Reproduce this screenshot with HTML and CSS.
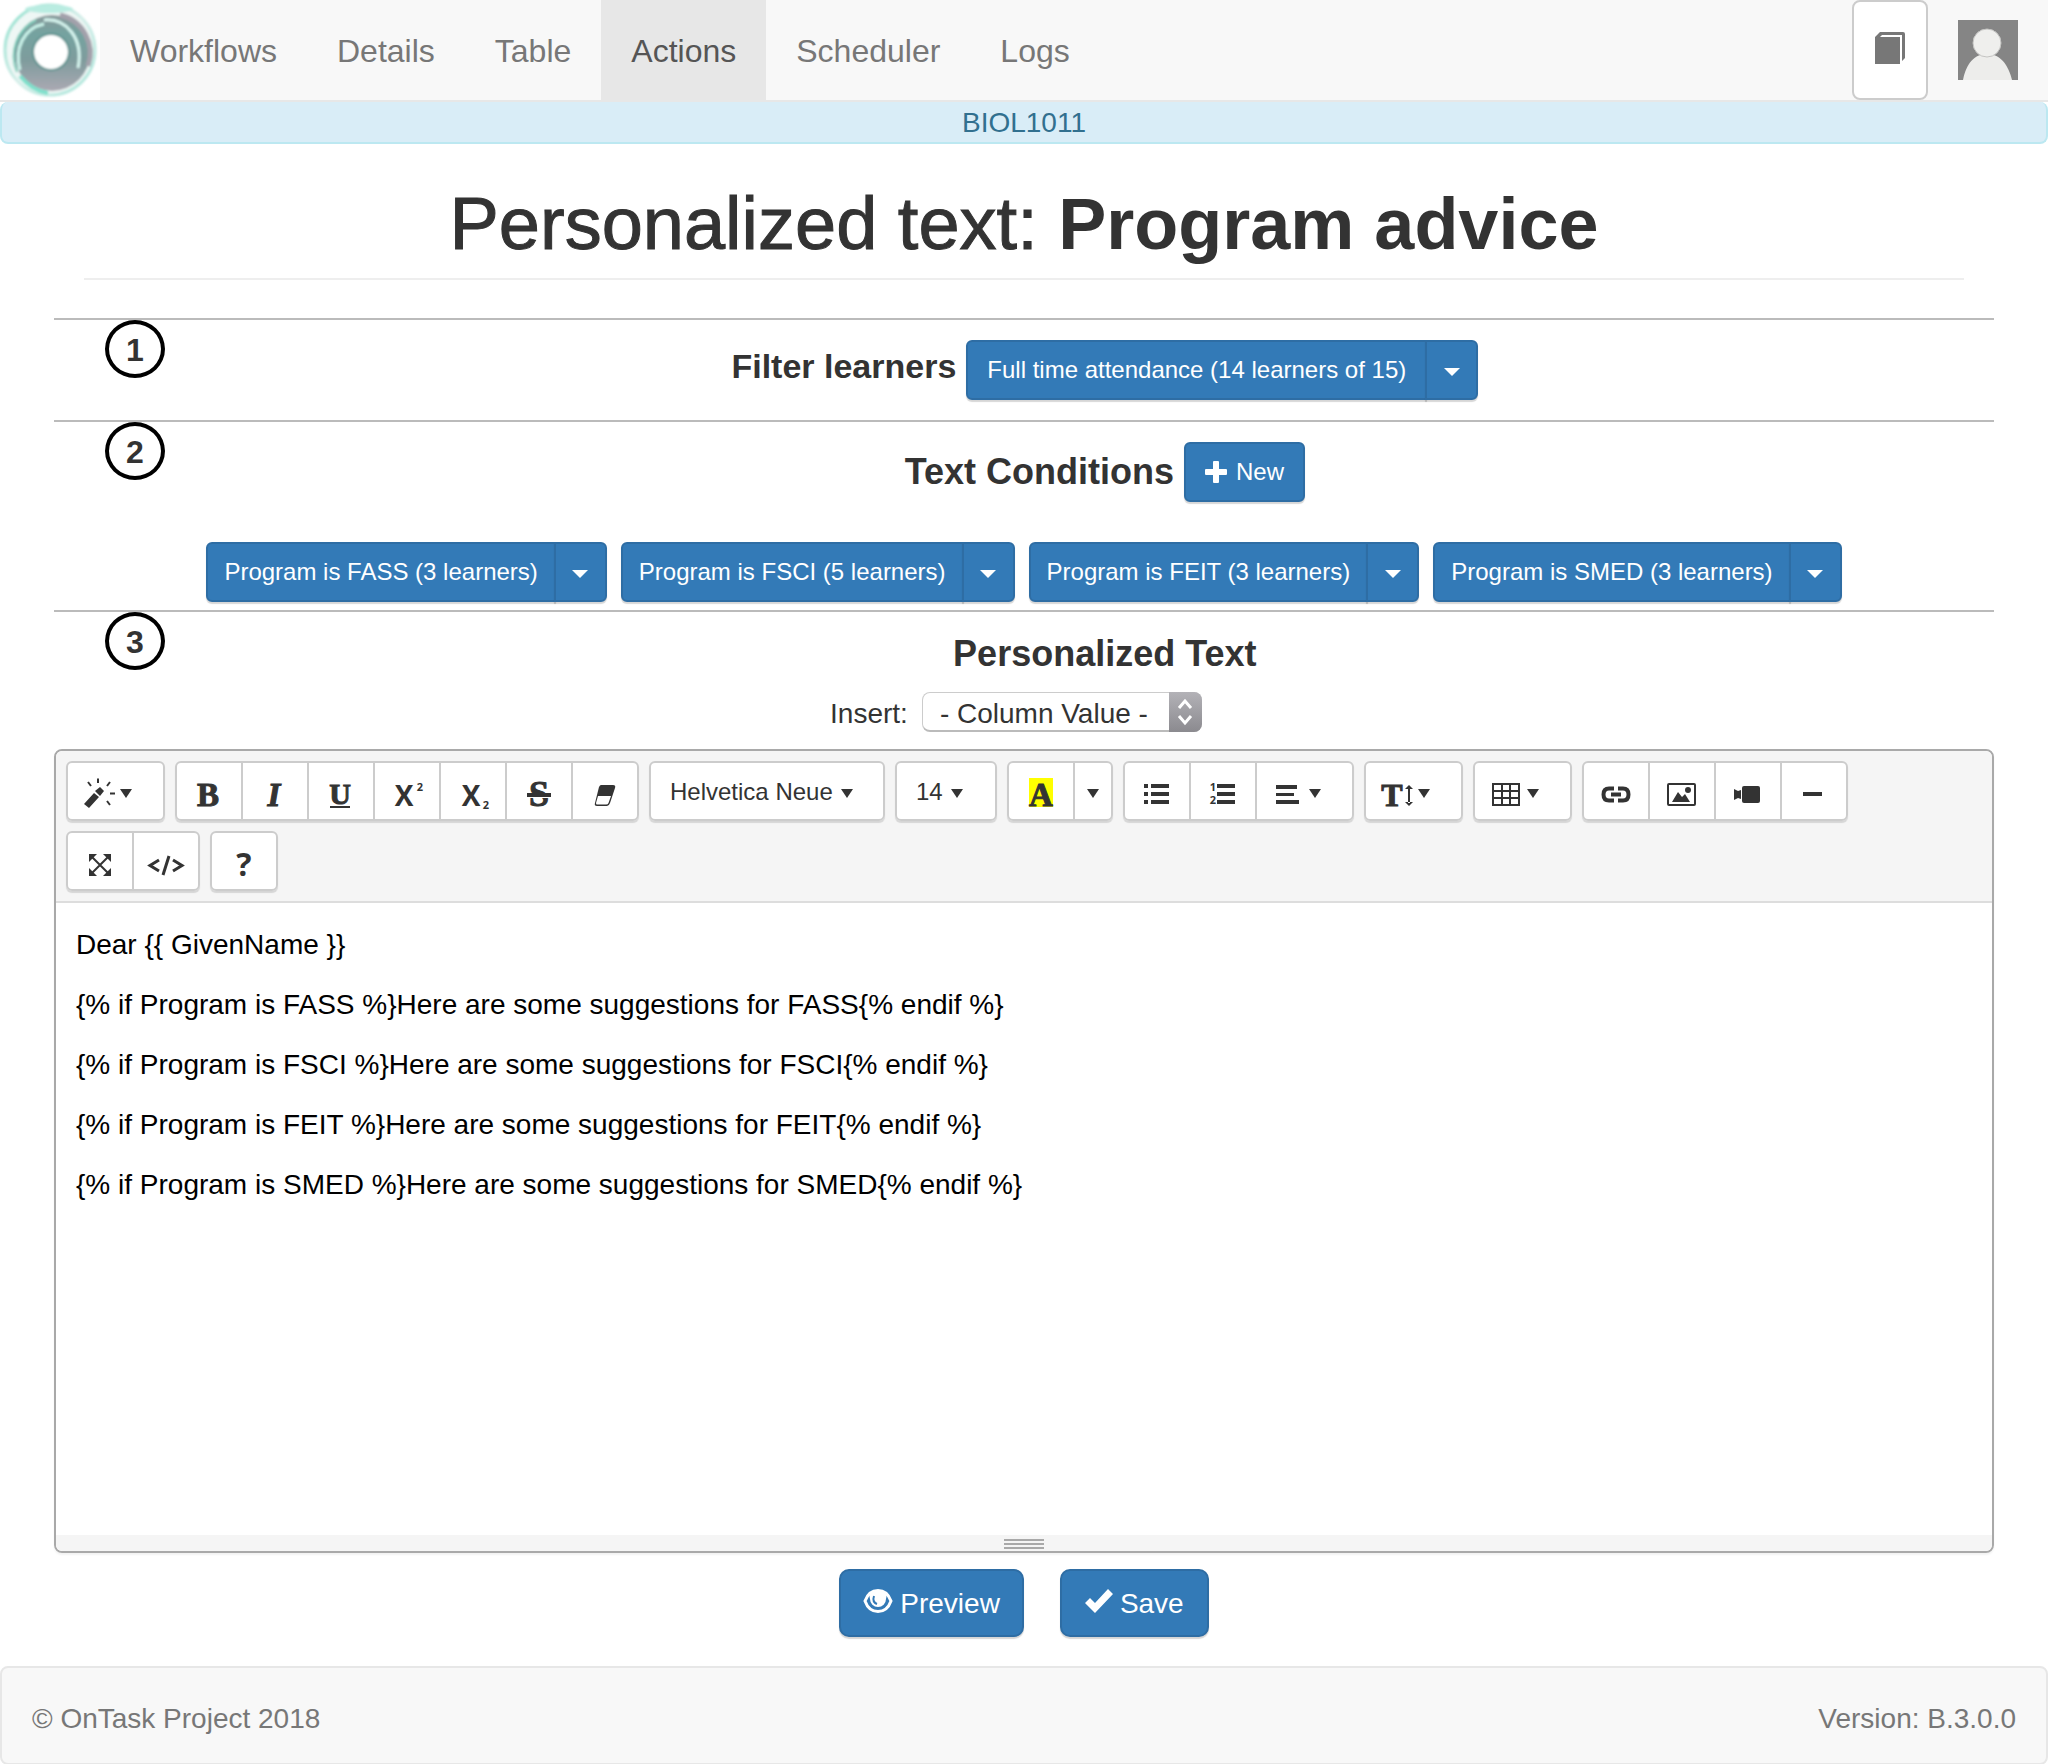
FILE: index.html
```html
<!DOCTYPE html>
<html lang="en">
<head>
<meta charset="utf-8">
<meta name="viewport" content="width=device-width, initial-scale=1">
<title>OnTask: Personalized text</title>
<link rel="stylesheet" href="styles.css">
</head>
<body>
<header>
  <nav class="navbar">
    <a class="brand" href="#" aria-label="OnTask">
      <svg width="100" height="100" viewBox="0 0 100 100">
        <defs>
          <linearGradient id="disc" x1="0" y1="0" x2="0" y2="1">
            <stop offset="0" stop-color="#8a9a9c"/>
            <stop offset=".25" stop-color="#74a3a0"/>
            <stop offset=".6" stop-color="#7f9c9d"/>
            <stop offset="1" stop-color="#aba9b3"/>
          </linearGradient>
          <linearGradient id="rim" x1="0" y1="0" x2="1" y2="1">
            <stop offset="0" stop-color="#8ee0cd"/>
            <stop offset=".5" stop-color="#d5eee9"/>
            <stop offset="1" stop-color="#a9e6da"/>
          </linearGradient>
          <filter id="soft"><feGaussianBlur stdDeviation="1"/></filter>
        </defs>
        <g filter="url(#soft)" fill="none">
          <circle cx="50" cy="50" r="45" fill="#eef7f5" stroke="url(#rim)" stroke-width="3"/>
          <ellipse cx="49" cy="9" rx="24" ry="4" fill="#b9ece1"/>
          <circle cx="52" cy="53" r="38" fill="url(#disc)"/>
          <path d="M60 15A39 39 0 0 1 88 66" stroke="#a3a1ab" stroke-width="5"/>
          <path d="M17 72A40 40 0 0 1 36 20" stroke="#7fcdbb" stroke-width="2"/>
          <path d="M20 70C14 48 24 28 44 24" stroke="#c9f2e9" stroke-width="3"/>
          <path d="M44 20C66 18 84 38 78 68" stroke="#d6f5ef" stroke-width="3"/>
          <path d="M20 76C28 86 36 91 48 93" stroke="#7fe0cc" stroke-width="4"/>
          <circle cx="51" cy="52" r="19" fill="#5f9390"/>
          <circle cx="51" cy="52" r="17" fill="#fff"/>
        </g>
      </svg>
    </a>
    <a class="nav-link" href="#">Workflows</a>
    <a class="nav-link" href="#">Details</a>
    <a class="nav-link" href="#">Table</a>
    <a class="nav-link active" href="#" aria-current="page">Actions</a>
    <a class="nav-link" href="#">Scheduler</a>
    <a class="nav-link" href="#">Logs</a>
    <div class="nav-right">
      <button class="book" type="button" aria-label="Documentation">
        <svg width="30" height="32" viewBox="0 0 30 32"><path fill="#777" d="M0 5L5 0H28Q30 0 30 2V26L27 29V3H7L5 5H25V32H0Z"/></svg>
      </button>
      <a class="avatar" href="#" aria-label="Profile">
        <svg width="60" height="60" viewBox="0 0 60 60"><path fill="#858585" d="M0 0H60V60H0Z"/><path fill="#ededeb" d="M5 60C8 44 16 34 29 34S50 44 54 60Z"/><circle cx="29" cy="23" r="14" fill="#efefed" stroke="#c4c4c2" stroke-width="1"/></svg>
      </a>
    </div>
  </nav>
  <div class="workflow-name">BIOL1011</div>
</header>

<main>
  <div class="page-header"><h1>Personalized text: <strong>Program advice</strong></h1></div>

  <section class="step filter">
    <div class="number">1</div>
    <div class="title-row">
      <h2>Filter learners</h2>
      <div class="split">
        <button class="btn" type="button">Full time attendance (14 learners of 15)</button>
        <button class="btn toggle" type="button" aria-label="Filter options"><span class="caret"></span></button>
      </div>
    </div>
  </section>

  <section class="step conditions">
    <div class="number">2</div>
    <div class="title-row">
      <h2>Text Conditions</h2>
      <button class="btn new" type="button"><svg width="22" height="22" viewBox="0 0 22 22"><path fill="#fff" d="M9 0H13Q14 0 14 1V8H21Q22 8 22 9V13Q22 14 21 14H14V21Q14 22 13 22H9Q8 22 8 21V14H1Q0 14 0 13V9Q0 8 1 8H8V1Q8 0 9 0Z"/></svg>New</button>
    </div>
    <div class="condition-list">
      <div class="split">
        <button class="btn" type="button">Program is FASS (3 learners)</button>
        <button class="btn toggle" type="button" aria-label="FASS options"><span class="caret"></span></button>
      </div>
      <div class="split">
        <button class="btn" type="button">Program is FSCI (5 learners)</button>
        <button class="btn toggle" type="button" aria-label="FSCI options"><span class="caret"></span></button>
      </div>
      <div class="split">
        <button class="btn" type="button">Program is FEIT (3 learners)</button>
        <button class="btn toggle" type="button" aria-label="FEIT options"><span class="caret"></span></button>
      </div>
      <div class="split">
        <button class="btn" type="button">Program is SMED (3 learners)</button>
        <button class="btn toggle" type="button" aria-label="SMED options"><span class="caret"></span></button>
      </div>
    </div>
  </section>

  <section class="step text">
    <div class="number">3</div>
    <div class="title-row"><h2>Personalized Text</h2></div>
    <div class="insert">
      <label for="column">Insert:</label>
      <div class="select">
        <select id="column"><option>- Column Value -</option></select>
        <svg class="stepper" width="33" height="40" viewBox="0 0 33 40"><path d="M10 16L16 9L22 16M10 24L16 31L22 24" fill="none" stroke="#fff" stroke-width="3"/></svg>
      </div>
    </div>
  </section>

  <div class="editor">
    <div class="toolbar">
      <div class="group">
        <button class="tool drop" type="button" aria-label="Style">
          <svg class="icon" viewBox="0 0 32 32"><path d="M1 26L11 15L16 19L6 30ZM12 13L17 9L21 13L17 18Z"/><path class="line" d="M15 .5V5M5 4L8 8M27 4L24 8M27 15.500H32M24 23L27 27"/></svg><span class="small-caret"></span>
        </button>
      </div>
      <div class="group">
        <button class="tool" type="button" aria-label="Bold"><svg class="icon" viewBox="0 0 32 32"><text class="serif" x="15" y="28">B</text></svg></button>
        <button class="tool" type="button" aria-label="Italic"><svg class="icon" viewBox="0 0 32 32"><text class="serif italic" x="15" y="28">I</text></svg></button>
        <button class="tool" type="button" aria-label="Underline"><svg class="icon" viewBox="0 0 32 32"><text class="serif u" x="15" y="26">U</text><path d="M5 28H25V30H5Z"/></svg></button>
        <button class="tool" type="button" aria-label="Superscript"><svg class="icon" viewBox="0 0 32 32"><text class="sans" x="13" y="28">X</text><text class="tiny" x="29" y="13">2</text></svg></button>
        <button class="tool" type="button" aria-label="Subscript"><svg class="icon" viewBox="0 0 32 32"><text class="sans" x="14" y="28">X</text><text class="tiny" x="29" y="31">2</text></svg></button>
        <button class="tool" type="button" aria-label="Strikethrough"><svg class="icon" viewBox="0 0 32 32"><text class="serif s" x="16" y="28">S</text><path fill="#fff" d="M4 19H28V20H4Z"/><path d="M4 15H28V19H4Z"/></svg></button>
        <button class="tool" type="button" aria-label="Remove formatting"><svg class="icon" viewBox="0 0 32 32"><path fill-rule="evenodd" d="M12 7H24Q27 7 26 10L21 25Q20 28 18 28H8Q5 28 6 25L10 9Q11 7 12 7ZM9 18L7 25Q7 26.500 8 26.500H17Q19 26.500 19.500 25L22 18Z"/></svg></button>
      </div>
      <div class="group">
        <button class="tool font" type="button">Helvetica Neue<span class="small-caret"></span></button>
      </div>
      <div class="group">
        <button class="tool size" type="button">14<span class="small-caret"></span></button>
      </div>
      <div class="group">
        <button class="tool" type="button" aria-label="Text colour"><svg class="icon" viewBox="0 0 32 32"><path fill="#ff0" d="M4 0H28V29H4Z"/><text class="serif" x="16" y="28">A</text></svg></button>
        <button class="tool narrow" type="button" aria-label="More colours"><span class="small-caret"></span></button>
      </div>
      <div class="group">
        <button class="tool" type="button" aria-label="Bulleted list"><svg class="icon" viewBox="0 0 32 32"><path d="M3 6H7V10H3ZM10 6H28V10H10ZM3 14H7V18H3ZM10 14H28V18H10ZM3 22H7V26H3ZM10 22H28V26H10Z"/></svg></button>
        <button class="tool" type="button" aria-label="Numbered list"><svg class="icon" viewBox="0 0 32 32"><text class="digit" x="6" y="13">1</text><text class="digit" x="6" y="26">2</text><path d="M10 6H28V10H10ZM10 14H28V18H10ZM10 22H28V26H10Z"/></svg></button>
        <button class="tool drop" type="button" aria-label="Paragraph">
          <svg class="icon" viewBox="0 0 32 32"><path d="M4 7H25V11H4ZM4 15H22V18H4ZM4 22H27V26H4Z"/></svg><span class="small-caret"></span>
        </button>
      </div>
      <div class="group">
        <button class="tool drop" type="button" aria-label="Line height">
          <svg class="icon" viewBox="0 0 32 32"><text class="serif t" x="11" y="28">T</text><path d="M27 10H29V25H27ZM24 11L28 7L32 11ZM24 24L28 28L32 24Z"/></svg><span class="small-caret"></span>
        </button>
      </div>
      <div class="group">
        <button class="tool drop" type="button" aria-label="Table">
          <svg class="icon" viewBox="0 0 32 32"><path class="line" d="M3 6H29V27H3ZM12 6V27M20 6V27M3 13H29M3 20H29"/></svg><span class="small-caret"></span>
        </button>
      </div>
      <div class="group">
        <button class="tool" type="button" aria-label="Link"><svg class="icon" viewBox="0 0 32 32"><path class="heavy" d="M14 10.500H9Q3.500 10.500 3.500 16.500T9 22.500H14M18 10.500H23Q28.500 10.500 28.500 16.500T23 22.500H18M11 16.500H21"/></svg></button>
        <button class="tool" type="button" aria-label="Picture"><svg class="icon" viewBox="0 0 32 32"><rect class="line" x="2" y="6" width="27" height="21" rx="1"/><path d="M6 24L12 14L16 19L19 16L24 24Z"/><circle cx="22" cy="12" r="3"/></svg></button>
        <button class="tool" type="button" aria-label="Video"><svg class="icon" viewBox="0 0 32 32"><rect x="10" y="8" width="18" height="17" rx="2"/><path d="M2 11L6 13L9 12V21L6 20L2 22Z"/></svg></button>
        <button class="tool" type="button" aria-label="Horizontal rule"><svg class="icon" viewBox="0 0 32 32"><path d="M5 14H24V18H5Z"/></svg></button>
      </div>
      <div class="group">
        <button class="tool" type="button" aria-label="Full screen"><svg class="icon" viewBox="0 0 32 32"><path d="M5 6H13L5 14ZM19 6H27V14ZM5 20L13 28H5ZM27 20V28H19Z"/><path class="line" d="M7 8L25 26M25 8L7 26"/></svg></button>
        <button class="tool" type="button" aria-label="Code view"><svg class="icon" viewBox="0 0 32 32"><path class="line code" d="M9 12L0 17.500L9 23M23 12L32 17.500L23 23M19 8L13 27"/></svg></button>
      </div>
      <div class="group">
        <button class="tool" type="button" aria-label="Help"><svg class="icon" viewBox="0 0 32 32"><text class="sans q" x="16" y="28">?</text></svg></button>
      </div>
    </div>
    <div class="content" contenteditable="true" role="textbox" aria-multiline="true" aria-label="Personalized text" spellcheck="false">
      <p>Dear {{ GivenName }}</p>
      <p>{% if Program is FASS %}Here are some suggestions for FASS{% endif %}</p>
      <p>{% if Program is FSCI %}Here are some suggestions for FSCI{% endif %}</p>
      <p>{% if Program is FEIT %}Here are some suggestions for FEIT{% endif %}</p>
      <p>{% if Program is SMED %}Here are some suggestions for SMED{% endif %}</p>
    </div>
    <div class="resize"><i></i><i></i><i></i></div>
  </div>

  <div class="actions">
    <button class="btn large preview" type="button"><svg width="30" height="24" viewBox="0 0 30 24"><path d="M2 12C7 -2 23 -2 28 12C23 26 7 26 2 12Z" fill="none" stroke="#fff" stroke-width="3"/><path fill="#fff" d="M7 4Q15 -2 23 4Q24 6 23 10A8 8 0 0 1 7 10Q6 6 7 4Z"/><path d="M11 7Q9 13 14 15" fill="none" stroke="#337ab7" stroke-width="2"/></svg>Preview</button>
    <button class="btn large save" type="button"><svg width="29" height="24" viewBox="0 0 29 24"><path fill="#fff" d="M0 14L5 9L10 14L23 0L28 5L10 24Z"/></svg>Save</button>
  </div>
</main>

<footer>
  <span>© OnTask Project 2018</span>
  <span>Version: B.3.0.0</span>
</footer>
</body>
</html>
```
FILE: styles.css
```css
* { box-sizing: border-box; }

body {
  margin: 0;
  background: #fff;
  color: #333;
  font-family: "Liberation Sans", Arial, sans-serif;
  font-size: 28px;
  line-height: 40px;
}

h1, h2, p { margin: 0; }
button, select { font-family: inherit; color: inherit; margin: 0; }
svg { display: block; flex: none; }

/* Top navigation */
.navbar {
  display: flex;
  background: #f8f8f8;
  border-bottom: 2px solid #e7e7e7;
}
.brand { background: #fff; }
.nav-link {
  padding: 31px 30px 29px;
  color: #777;
  font-size: 32px;
  text-decoration: none;
}
.nav-link.active { background: #e7e7e7; color: #555; }
.nav-right {
  display: flex;
  align-items: center;
  gap: 30px;
  margin-left: auto;
  padding-right: 30px;
}
.book {
  display: flex;
  justify-content: center;
  align-self: stretch;
  width: 76px;
  padding: 30px 0;
  background: #fff;
  border: 2px solid #ccc;
  border-radius: 8px;
}
.workflow-name {
  padding-top: 2px;
  border: 2px solid #bce8f1;
  border-top: 0;
  border-radius: 8px;
  background: #d9edf7;
  color: #31708f;
  line-height: 38px;
  text-align: center;
}

/* Page title */
main { padding: 0 54px; }
.page-header {
  margin: 40px 30px 38px;
  padding-bottom: 14px;
  border-bottom: 2px solid #eee;
}
h1 {
  font-size: 74px;
  font-weight: 400;
  line-height: 80px;
  text-align: center;
  -webkit-text-stroke: 1px #333;
}
h1 strong { font-size: 72px; -webkit-text-stroke: 0; }

/* Numbered steps */
.step {
  display: grid;
  grid-template-columns: 1fr 11fr;
  border-top: 2px solid #bbb;
}
.number {
  display: flex;
  align-items: center;
  justify-content: center;
  justify-self: center;
  width: 60px;
  height: 58px;
  padding-top: 2px;
  border: 4px solid #000;
  border-radius: 50%;
  font-size: 32px;
  font-weight: 700;
}
.title-row {
  display: flex;
  align-items: center;
  justify-content: center;
  gap: 10px;
  padding-top: 20px;
}
h2 { font-size: 36px; }
.filter { padding-bottom: 20px; }
.filter .title-row { align-items: baseline; }
.filter h2 { font-size: 34px; }
.conditions { row-gap: 40px; padding-bottom: 8px; }
.condition-list {
  grid-column: 1 / -1;
  display: flex;
  justify-content: center;
  gap: 14px;
}
.condition-list .btn:first-child { padding: 0 16px; }

/* Primary buttons */
.btn {
  display: flex;
  align-items: center;
  justify-content: center;
  height: 60px;
  padding: 0 19px;
  background: #337ab7;
  border: 2px solid #2e6da4;
  border-radius: 6px;
  box-shadow: 0 2px 1px rgba(0, 0, 0, .16);
  color: #fff;
  font-size: 24px;
}
.split { display: flex; }
.split .btn:first-child { border-radius: 6px 0 0 6px; }
.split .btn.toggle {
  width: 53px;
  margin-left: -2px;
  padding: 4px 0 0;
  border-radius: 0 6px 6px 0;
}
.caret {
  border: 8px solid transparent;
  border-top-color: #fff;
  border-bottom: 0;
}
.new { gap: 9px; }

/* Column picker */
.text { row-gap: 18px; padding-bottom: 17px; }
.text .title-row { padding-top: 22px; }
.insert {
  grid-column: 1 / -1;
  display: flex;
  justify-content: center;
  gap: 14px;
  padding-right: 16px;
}
.insert label { padding-top: 3px; line-height: 37px; }
.select { position: relative; }
.select select {
  appearance: none;
  display: block;
  width: 280px;
  height: 40px;
  padding: 3px 33px 0 17px;
  background: #fff;
  border: 1px solid #ccc;
  border-bottom: 2px solid #bbb;
  border-radius: 8px;
  font-size: 28px;
}
.stepper {
  position: absolute;
  top: 0;
  right: 0;
  border-radius: 0 8px 8px 0;
  background: linear-gradient(#b3b2b7, #8b8a8f);
  pointer-events: none;
}

/* Editor */
.editor {
  overflow: hidden;
  border: 2px solid #a9a9a9;
  border-radius: 8px;
  box-shadow: 0 2px 2px rgba(0, 0, 0, .05);
}
.toolbar {
  display: flex;
  flex-wrap: wrap;
  gap: 10px;
  padding: 10px;
  background: #f5f5f5;
  border-bottom: 2px solid #ddd;
}
.group {
  display: flex;
  border-radius: 6px;
  box-shadow: 0 2px 1px rgba(0, 0, 0, .13);
}
.tool {
  display: flex;
  align-items: center;
  justify-content: center;
  width: 68px;
  height: 60px;
  padding: 5px 0 0;
  background: #fff;
  border: 2px solid #ccc;
  font-size: 24px;
}
.tool + .tool { margin-left: -2px; }
.tool:first-child { border-radius: 6px 0 0 6px; }
.tool:last-child { border-radius: 0 6px 6px 0; }
.tool:only-child { border-radius: 6px; }
.tool.drop {
  justify-content: flex-start;
  gap: 5px;
  width: 99px;
  padding-left: 15px;
}
.tool.narrow { width: 40px; }
.tool.font, .tool.size {
  justify-content: flex-start;
  gap: 8px;
  width: 236px;
  padding: 2px 0 0 19px;
}
.tool.size { width: 102px; }
.small-caret {
  border: 6px solid transparent;
  border-top: 9px solid #333;
  border-bottom: 0;
}
.font .small-caret, .size .small-caret { margin-top: 3px; }
.icon {
  width: 32px;
  height: 32px;
  overflow: visible;
  fill: #333;
}
.icon .line { fill: none; stroke: #333; stroke-width: 2px; }
.icon .code { stroke-width: 3px; }
.icon .heavy { fill: none; stroke: #333; stroke-width: 4px; }
.icon text { text-anchor: middle; font-weight: 700; }
.icon .serif {
  font-family: "Liberation Serif", serif;
  font-size: 33px;
  stroke: #333;
  stroke-width: 1px;
}
.icon .italic { font-style: italic; }
.icon .u { font-size: 30px; }
.icon .s { font-size: 36px; }
.icon .t { font-size: 32px; }
.icon .sans { font-family: "Open Sans", sans-serif; font-size: 28px; }
.icon .q { font-size: 32px; }
.icon .tiny, .icon .digit { font-family: "Open Sans", sans-serif; font-size: 11px; }

.content {
  min-height: 632px;
  padding: 22px 20px 18px;
  color: #000;
  outline: 0;
}
.content p { margin-bottom: 20px; }
.resize {
  display: flex;
  flex-direction: column;
  align-items: center;
  gap: 2px;
  padding: 4px 0 2px;
  background: #f5f5f5;
}
.resize i { width: 40px; height: 2px; background: #a9a9a9; }

/* Form actions */
.actions {
  display: flex;
  justify-content: center;
  gap: 36px;
  padding: 16px 0 29px;
}
.large {
  height: 68px;
  padding: 2px 22px 0;
  border-radius: 10px;
  font-size: 28px;
}
.large svg { margin-bottom: 6px; }
.preview { gap: 7px; }
.save { gap: 6px; padding: 2px 23px 0; }

footer {
  display: flex;
  justify-content: space-between;
  padding: 31px 30px 24px;
  background: #f8f8f8;
  border: 2px solid #e7e7e7;
  border-radius: 8px;
  color: #777;
}
```
